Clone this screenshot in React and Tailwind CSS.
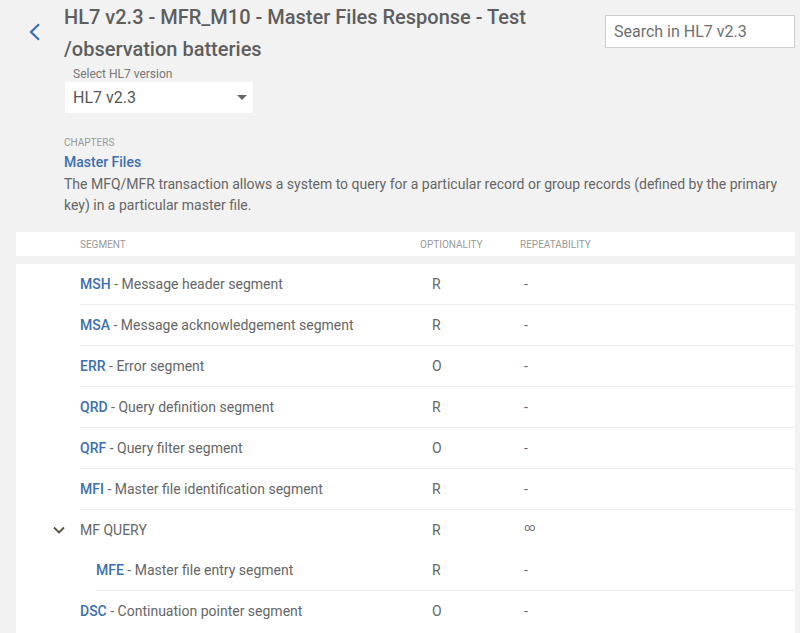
import React from 'react';

const ROWS = [
  { code: 'MSH', name: 'Message header segment', opt: 'R', rep: '-' },
  { code: 'MSA', name: 'Message acknowledgement segment', opt: 'R', rep: '-' },
  { code: 'ERR', name: 'Error segment', opt: 'O', rep: '-' },
  { code: 'QRD', name: 'Query definition segment', opt: 'R', rep: '-' },
  { code: 'QRF', name: 'Query filter segment', opt: 'O', rep: '-' },
  { code: 'MFI', name: 'Master file identification segment', opt: 'R', rep: '-' },
];

function Row({ code, name, opt, rep, indent, line = true }) {
  return (
    <div className={`flex items-center h-[41px] ${line ? 'border-b border-[#ececec]' : ''} ${indent ? 'ml-20' : 'ml-16'}`}>
      <div className={`${indent ? 'w-[324px]' : 'w-[340px]'} text-[14px] text-[#666]`}>
        <span className="text-[#3d6fae] font-medium">{code}</span> - {name}
      </div>
      <div className="w-[100px] pl-3 text-[14px] text-[#666]">{opt}</div>
      <div className="pl-1 text-[14px] text-[#666]">{rep}</div>
    </div>
  );
}

export default function App() {
  return (
    <div className="w-[800px] h-[633px] overflow-hidden bg-[#f2f2f2] font-['Roboto',sans-serif]">
      <div className="flex">
        <div className="w-16 pl-[27px] pt-[23px]">
          <svg width="14" height="18" viewBox="0 0 14 18" fill="none">
            <path d="M12 1.2 L4 9 L12 16.8" stroke="#3d6fae" strokeWidth="2.2" />
          </svg>
        </div>
        <div className="flex-1">
          <h1 className="text-[20px] leading-[32px] font-medium text-[#5e5e5e] pr-[70px] pt-[1px]">
            HL7 v2.3 - MFR_M10 - Master Files Response - Test /observation batteries
          </h1>
          <div className="mt-[1px] ml-[1px]">
            <div className="pl-2 text-[12px] leading-[16px] text-[#777]">Select HL7 version</div>
            <div className="w-[188px] h-[31px] bg-white flex items-center justify-between pl-2 pr-[6px]">
              <span className="text-[16px] text-[#555]">HL7 v2.3</span>
              <svg width="10" height="5" viewBox="0 0 10 5"><path d="M0 0 H10 L5 5 Z" fill="#666" /></svg>
            </div>
          </div>
        </div>
        <div className="pt-[15px] pr-[5px]">
          <div className="w-[190px] h-[33px] bg-white border border-[#cfcfcf] flex items-center pl-2 text-[16px] text-[#6f6f6f]">
            Search in HL7 v2.3
          </div>
        </div>
      </div>

      <div className="pl-16 pr-3 mt-[24px]">
        <div className="text-[10px] leading-[12px] uppercase text-[#999]">Chapters</div>
        <div className="text-[14px] leading-[18px] font-medium text-[#3d6fae] mt-[4px]">Master Files</div>
        <p className="text-[14px] leading-[21px] text-[#666] mt-[3px]">
          The MFQ/MFR transaction allows a system to query for a particular record or group records (defined by the primary key) in a particular master file.
        </p>
      </div>

      <div className="ml-4 mr-[5px] mt-[16px]">
        <div className="bg-white h-6 flex items-center text-[10px] uppercase text-[#999]">
          <div className="w-[404px] pl-16">Segment</div>
          <div className="w-[100px]">Optionality</div>
          <div>Repeatability</div>
        </div>
        <div className="bg-white mt-2 pb-1">
          {ROWS.map((r) => (
            <Row key={r.code} {...r} />
          ))}
          <div className="flex items-center h-[40px] ml-16">
            <svg className="-ml-[27px] mr-[15px]" width="12" height="8" viewBox="0 0 12 8" fill="none">
              <path d="M1 1.5 L6 6.5 L11 1.5" stroke="#5a5040" strokeWidth="1.8" />
            </svg>
            <div className="w-[340px] text-[14px] text-[#666]">MF QUERY</div>
            <div className="w-[100px] pl-3 text-[14px] text-[#666]">R</div>
            <div className="pl-1 text-[11px] text-[#666] -mt-[4px]">∞</div>
          </div>
          <Row code="MFE" name="Master file entry segment" opt="R" rep="-" indent />
          <Row code="DSC" name="Continuation pointer segment" opt="O" rep="-" line={false} />
        </div>
      </div>
    </div>
  );
}
